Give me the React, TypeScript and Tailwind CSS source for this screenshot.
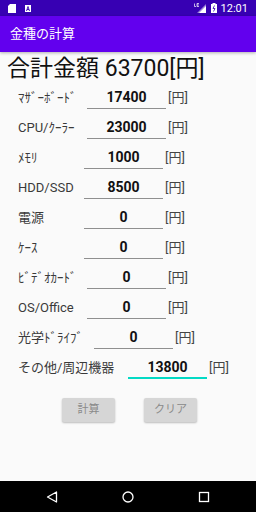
const rows = [
  { label: 'ﾏｻﾞｰﾎﾞｰﾄﾞ', value: '17400', w: 'w-[69px]' },
  { label: 'CPU/ｸｰﾗｰ', value: '23000', w: 'w-[69px]' },
  { label: 'ﾒﾓﾘ', value: '1000', w: 'w-[66px]' },
  { label: 'HDD/SSD', value: '8500', w: 'w-[66px]' },
  { label: '電源', value: '0', w: 'w-[66px]' },
  { label: 'ｹｰｽ', value: '0', w: 'w-[66px]' },
  { label: 'ﾋﾞﾃﾞｵｶｰﾄﾞ', value: '0', w: 'w-[69px]' },
  { label: 'OS/Office', value: '0', w: 'w-[69px]' },
  { label: '光学ﾄﾞﾗｲﾌﾞ', value: '0', w: 'w-[76px]' },
];

function Row({ label, value, w, focused }: { label: string; value: string; w: string; focused?: boolean }) {
  return (
    <div className="flex items-center h-[30px] pl-[18px]">
      <span className={`${w} shrink-0 text-[13px] text-[#3a3a3a] whitespace-nowrap`}>{label}</span>
      <div
        className={`w-[79px] h-[22px] flex items-center justify-center text-[14px] font-bold text-[#111] ${
          focused ? 'border-b-2 border-[#03dac5]' : 'border-b border-[#8f8f8f]'
        }`}
      >
        {value}
      </div>
      <span className="ml-[2px] text-[13px] text-[#444]">[円]</span>
    </div>
  );
}

export default function App() {
  return (
    <div
      className="w-[256px] h-[512px] bg-[#fafafa] flex flex-col overflow-hidden"
      style={{ fontFamily: 'Roboto, "Noto Sans CJK JP", sans-serif' }}
    >
      {/* status bar */}
      <div className="h-[16px] bg-[#3700b3] flex items-center px-[8px] text-white">
        <svg width="8" height="9" viewBox="0 0 8 9">
          <path d="M2 0h6v9H0V2z" fill="#fff" />
        </svg>
        <svg className="ml-[9px]" width="6" height="7" viewBox="0 0 6 7">
          <rect width="6" height="7" fill="#fff" />
          <path d="M1.5 6L3 1.5 4.5 6M2 4.5h2" stroke="#3700b3" strokeWidth="0.9" fill="none" />
        </svg>
        <div className="flex-1" />
        <svg width="12" height="10" viewBox="0 0 12 10">
          <path d="M12 0v10H3L12 1z" fill="#fff" opacity="0.5" />
          <path d="M12 3v7H5z" fill="#fff" />
          <path d="M0.5 0.5v3h1.5M3 0.5v3M5 0.5H3M4.8 2H3M5 3.5H3" stroke="#fff" strokeWidth="0.7" fill="none" />
        </svg>
        <svg className="ml-[5px]" width="6" height="10" viewBox="0 0 6 10">
          <rect x="1.5" y="0" width="3" height="1" fill="#fff" />
          <rect x="0" y="1" width="6" height="9" fill="#fff" />
          <path d="M3.5 2.5L2 5.5h2L2.5 8.5" stroke="#3700b3" strokeWidth="0.8" fill="none" />
        </svg>
        <span className="ml-[4px] text-[11px] leading-none">12:01</span>
      </div>

      {/* app bar */}
      <div className="h-[36px] bg-[#6200ee] flex items-center pl-[10px] shadow-[0_1px_3px_rgba(0,0,0,0.3)]">
        <span className="text-white text-[13px]">金種の計算</span>
      </div>

      {/* total */}
      <div className="pl-[7px] pt-[3px] h-[31px] text-[23px] leading-[28px] text-[#111] whitespace-nowrap">
        合計金額 63700[円]
      </div>

      {rows.map((r) => (
        <Row key={r.label} {...r} />
      ))}
      <Row label="その他/周辺機器" value="13800" w="w-[110px]" focused />

      {/* buttons */}
      <div className="flex pl-[62px] gap-[29px] mt-[15px]">
        <div className="w-[53px] h-[24px] bg-[#d6d6d6] rounded-[2px] shadow-[0_1px_2px_rgba(0,0,0,0.25)] flex items-center justify-center text-[11px] text-[#8a8a8a]">
          計算
        </div>
        <div className="w-[53px] h-[24px] bg-[#d6d6d6] rounded-[2px] shadow-[0_1px_2px_rgba(0,0,0,0.25)] flex items-center justify-center text-[11px] text-[#8a8a8a]">
          クリア
        </div>
      </div>

      <div className="flex-1" />

      {/* nav bar */}
      <div className="h-[31px] bg-black flex items-center justify-between px-[46px]">
        <svg width="12" height="12" viewBox="0 0 12 12">
          <path d="M10.5 1L1.5 6l9 5z" stroke="#fff" strokeWidth="1.3" fill="none" strokeLinejoin="round" />
        </svg>
        <svg width="12" height="12" viewBox="0 0 12 12">
          <circle cx="6" cy="6" r="5" stroke="#fff" strokeWidth="1.3" fill="none" />
        </svg>
        <svg width="12" height="12" viewBox="0 0 12 12">
          <rect x="1.5" y="1.5" width="9" height="9" stroke="#fff" strokeWidth="1.3" fill="none" />
        </svg>
      </div>
    </div>
  );
}
